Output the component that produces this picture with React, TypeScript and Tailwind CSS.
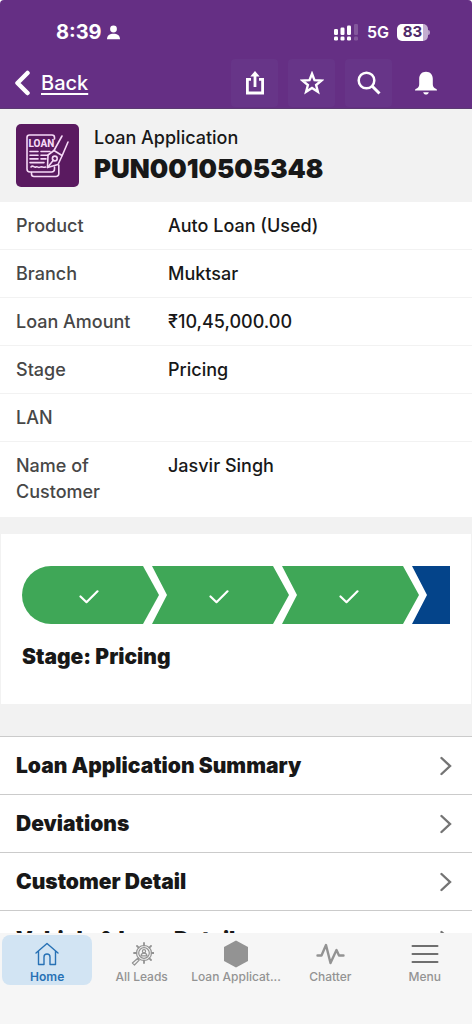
import type { ReactNode } from "react";
import clsx from "clsx";

interface Field {
  label: string;
  value: string;
}

const fields: Field[] = [
  { label: "Product", value: "Auto Loan (Used)" },
  { label: "Branch", value: "Muktsar" },
  { label: "Loan Amount", value: "₹10,45,000.00" },
  { label: "Stage", value: "Pricing" },
  { label: "LAN", value: "" },
  { label: "Name of Customer", value: "Jasvir Singh" },
];

const sections = [
  "Loan Application Summary",
  "Deviations",
  "Customer Detail",
  "Vehicle & Loan Detail",
];

function StatusBar() {
  return (
    <div className="flex h-[58px] items-center justify-between pt-[6px] pr-[42px] pl-14">
      <div className="flex items-center gap-1">
        <span className="text-xl leading-6 font-bold">8:39</span>
        <svg width="15" height="15" viewBox="0 0 15 15" fill="currentColor">
          <circle cx="7.5" cy="4" r="3.4" />
          <path d="M1 14.2c0-3.6 2.8-5.4 6.5-5.4s6.5 1.8 6.5 5.4z" />
        </svg>
      </div>
      <div className="flex items-center gap-2">
        <svg width="25" height="17" viewBox="0 0 25 17" fill="currentColor">
          <rect x="0" y="5" width="4" height="6" rx="1.2" />
          <rect x="6.5" y="3.5" width="4" height="7.5" rx="1.2" />
          <rect x="13" y="1.5" width="4" height="9.5" rx="1.2" />
          <rect x="0" y="12.5" width="4" height="4" rx="1.2" />
          <rect x="6.5" y="12.5" width="4" height="4" rx="1.2" />
          <rect x="13" y="12.5" width="4" height="4" rx="1.2" />
          <rect x="20" y="0" width="4" height="11" rx="1.2" opacity="0.2" />
          <rect x="20" y="12.5" width="4" height="4" rx="1.2" opacity="0.2" />
        </svg>
        <span className="text-base leading-6 font-semibold">5G</span>
        <div className="flex items-center">
          <span className="flex h-[17px] w-[31px] items-center justify-center rounded-[5px] bg-linear-to-r from-white from-85% to-[#c3aed0] to-85% text-[15px] leading-4 font-bold text-[#4f2a68]">
            83
          </span>
          <span className="h-[5px] w-[2px] rounded-r-full bg-[#b59cc6]" />
        </div>
      </div>
    </div>
  );
}

function HeaderButton({
  label,
  plain,
  children,
}: {
  label: string;
  plain?: boolean;
  children: ReactNode;
}) {
  return (
    <button
      aria-label={label}
      className={clsx(
        "flex h-12 w-[47px] items-center justify-center rounded-sm",
        !plain && "bg-[#673588]"
      )}
    >
      {children}
    </button>
  );
}

function Header() {
  return (
    <header className="shrink-0 rounded-t-[4px] border-b border-[#5b3a72] bg-[#652f84] text-white">
      <StatusBar />
      <div className="flex h-[50px] items-center justify-between pr-[23px] pl-[14px]">
        <a href="#back" className="flex items-center gap-[10px]">
          <svg width="17" height="26" viewBox="0 0 17 26" fill="none">
            <path
              d="M13.5 3 3.5 13l10 10"
              stroke="currentColor"
              strokeWidth="4.5"
              strokeLinecap="round"
              strokeLinejoin="round"
            />
          </svg>
          <span className="text-xl leading-6 font-medium underline decoration-2 underline-offset-3">
            Back
          </span>
        </a>
        <div className="flex gap-[10px]">
          <HeaderButton label="Share">
            <svg width="20" height="24" viewBox="0 0 20 24" fill="none" stroke="currentColor" strokeWidth="2.8">
              <path d="M6 8.4H2.4V22h15.2V8.4H14" />
              <path d="M10 16V4" />
              <path d="M10 0 5.3 5.6h9.4z" fill="currentColor" stroke="none" />
            </svg>
          </HeaderButton>
          <HeaderButton label="Favorite">
            <svg width="24" height="24" viewBox="0 0 24 24" fill="none" stroke="currentColor" strokeWidth="2.4">
              <path d="m12 2.8 2.5 6.4 6.9.4-5.3 4.4 1.8 6.8-5.900-3.800-5.900 3.800 1.800-6.800-5.300-4.400 6.900-.4z" />
            </svg>
          </HeaderButton>
          <HeaderButton label="Search">
            <svg width="24" height="24" viewBox="0 0 24 24" fill="none" stroke="currentColor" strokeWidth="2.5">
              <circle cx="9.5" cy="9.5" r="7.8" />
              <path d="m15 15 7.5 7.5" strokeWidth="3" />
            </svg>
          </HeaderButton>
          <HeaderButton label="Notifications" plain>
            <svg width="24" height="24" viewBox="0 0 24 24" fill="currentColor">
              <path d="M12 .8c-4.200 0-6.800 2.800-6.800 7v5.400c0 2.300-1 3.700-3 4.600-.9.400-1.200.8-1.200 1.800h22c0-1-.3-1.400-1.200-1.800-2-.9-3-2.300-3-4.600V7.800c0-4.200-2.600-7-6.800-7z" />
              <path d="M9.200 21.200h5.600c-.4 1.500-1.400 2.300-2.800 2.300s-2.400-.8-2.800-2.300z" />
            </svg>
          </HeaderButton>
        </div>
      </div>
    </header>
  );
}

function LoanIcon() {
  return (
    <svg
      className="shrink-0 rounded-[5px] bg-[#5a1a60]"
      width="63"
      height="63"
      viewBox="0 0 63 63"
      fill="none"
      stroke="#f6d9f7"
      strokeWidth="1.6"
      strokeLinecap="round"
      strokeLinejoin="round"
    >
      <path d="M38.5 15v-1.5A2.5 2.5 0 0 0 36 11H13.5a2.5 2.5 0 0 0-2.5 2.5V45a3 3 0 0 0 3 3h21.500a3 3 0 0 0 3-3V43" />
      <path d="M15.5 48.5V50a2.500 2.500 0 0 0 2.500 2.500h22a2.800 2.800 0 0 0 2.800-2.800V41" />
      <text
        className="font-[Roboto,sans-serif]"
        x="12.5"
        y="22.5"
        fontSize="10"
        fontWeight="800"
        fill="#f6d9f7"
        stroke="none"
      >
        LOAN
      </text>
      <path d="M14 27.5h8M25 27.5h9M14 31.2h8M25 31.2h7M14 34.9h8M25 34.9h5M14 38.6h14M15 43c2-2.500 3 1 5 0s2 1.500 4 .2 3 1 5.500-.2" />
      <path d="m46 12-8 14.500-6 4.500-.5 12.500 10.500-3 4-8.500L52 18" />
      <path d="m38 26.500 8 5M31.500 43.500l6-7.500" />
      <circle cx="38.8" cy="34.5" r="2.4" />
    </svg>
  );
}

function StepCheck() {
  return (
    <svg className="mt-1" width="20" height="14" viewBox="0 0 20 14" fill="none">
      <path
        d="m1.5 6.500 6 5.700L18.500 1.300"
        stroke="white"
        strokeWidth="2.2"
        strokeLinecap="round"
        strokeLinejoin="round"
      />
    </svg>
  );
}

function StagePath() {
  return (
    <div className="mx-px bg-white px-[21px] pt-8 pb-[34px]">
      <ol className="flex h-[58px]">
        <li className="flex w-[137px] shrink-0 items-center justify-center rounded-l-full bg-[#3fa757] pr-[3px] [clip-path:polygon(0_0,calc(100%-16px)_0,100%_50%,calc(100%-16px)_100%,0_100%)]">
          <StepCheck />
        </li>
        {["Underwriting", "Approval"].map((step) => (
          <li
            key={step}
            aria-label={step}
            className="-ml-[7px] flex w-[137px] shrink-0 items-center justify-center bg-[#3fa757] pr-[3px] [clip-path:polygon(0_0,calc(100%-16px)_0,100%_50%,calc(100%-16px)_100%,0_100%,15px_50%)]"
          >
            <StepCheck />
          </li>
        ))}
        <li className="-ml-[7px] flex-1 bg-[#04448a] [clip-path:polygon(0_0,100%_0,100%_100%,0_100%,15px_50%)]" />
      </ol>
      <p className="mt-5 text-[21px] leading-[26px] font-black">Stage: Pricing</p>
    </div>
  );
}

function SectionRow({ title }: { title: string }) {
  return (
    <li className="border-t border-[#cbcbcb]">
      <button className="flex h-[57px] w-full items-center justify-between pr-5 pl-4 text-left text-[21px] leading-[26px] font-black">
        {title}
        <svg width="12" height="20" viewBox="0 0 12 20" fill="none">
          <path d="m1.5 2 8.500 8-8.500 8" stroke="#747474" strokeWidth="2.4" strokeLinecap="round" />
        </svg>
      </button>
    </li>
  );
}

function NavItem({
  label,
  active,
  children,
}: {
  label: string;
  active?: boolean;
  children: ReactNode;
}) {
  return (
    <a
      href="#nav"
      aria-current={active ? "page" : undefined}
      className={clsx(
        "mx-[2px] flex h-[50px] flex-col items-center rounded-lg pt-1 text-xs leading-4",
        active
          ? "bg-[#d2e4f3] font-semibold text-[#2771b5]"
          : "font-medium text-[#939393]"
      )}
    >
      <span className="flex h-8 items-center">{children}</span>
      <span className="whitespace-nowrap">{label}</span>
    </a>
  );
}

function BottomNav() {
  return (
    <nav className="grid h-[91px] shrink-0 grid-cols-5 bg-[#f6f6f6] pt-[2px]">
      <NavItem label="Home" active>
        <svg width="24" height="24" viewBox="0 0 24 24" fill="none" stroke="currentColor" strokeWidth="1.4" strokeLinejoin="round" strokeLinecap="round">
          <path d="M1 11 12 1.500 23 11M3.500 9v13.500h5.500V15a3 3 0 0 1 6 0v7.500h5.500V9" />
        </svg>
      </NavItem>
      <NavItem label="All Leads">
        <svg width="24" height="24" viewBox="0 0 24 24" fill="none" stroke="currentColor" strokeWidth="1.2" strokeLinecap="round" strokeLinejoin="round">
          <circle cx="14" cy="11" r="7.5" />
          <circle cx="14" cy="11" r="5.3" />
          <circle cx="14" cy="9.3" r="1.6" />
          <path d="M11 13.800c.3-1.900 1.300-2.600 3-2.600s2.700.7 3 2.600z" />
          <path d="m8.500 16-1.500 1.500M7.500 16.500l1.700 1.700L4.500 23 2.400 21z" />
          <path d="M14 3.500V1M21.500 11H24M19.300 5.700 21 4M8.700 5.700 7 4M6.500 11H4M19.300 16.300 21 18M14 18.500V21" strokeWidth="1.8" />
        </svg>
      </NavItem>
      <NavItem label="Loan Applicat...">
        <svg width="26" height="28" viewBox="0 0 26 28" fill="#939393">
          <path d="M13 .5 25 7v14l-12 6.500L1 21V7z" />
        </svg>
      </NavItem>
      <NavItem label="Chatter">
        <svg width="29" height="22" viewBox="0 0 29 22" fill="none" stroke="currentColor" strokeWidth="2.4" strokeLinecap="round" strokeLinejoin="round">
          <path d="M1.500 12.500H5.500L10 2l4.500 18 6-13 2.500 5.500h4.500" />
        </svg>
      </NavItem>
      <NavItem label="Menu">
        <svg width="28" height="20" viewBox="0 0 28 20" stroke="#6f6f6f" strokeWidth="2" strokeLinecap="round">
          <path d="M1.500 2h25M1.500 10h25M1.500 18h25" />
        </svg>
      </NavItem>
    </nav>
  );
}

export default function App() {
  return (
    <div className="flex h-screen flex-col bg-white font-[Inter,'Noto_Sans',sans-serif] text-[#181818]">
      <Header />

      <main className="min-h-0 flex-1 overflow-hidden bg-[#f2f2f2]">
        <div className="flex h-[93px] items-center gap-[15px] px-4">
          <LoanIcon />
          <div>
            <p className="text-lg leading-[26px] font-medium">Loan Application</p>
            <h1 className="text-[26px] leading-9 font-black">PUN0010505348</h1>
          </div>
        </div>

        {/* Record highlights */}
        <dl className="bg-white text-lg leading-[26px] font-medium">
          {fields.map((field) => (
            <div
              key={field.label}
              className="flex border-b border-[#f2f2f2] px-4 pt-[11px] pb-[10px] last:border-0 last:pb-3"
            >
              <dt className="w-[152px] shrink-0 pr-4 text-[#474747]">{field.label}</dt>
              <dd>{field.value}</dd>
            </div>
          ))}
        </dl>

        <div className="pt-[17px] pb-8">
          <StagePath />
        </div>

        <ul className="bg-white">
          {sections.map((title) => (
            <SectionRow key={title} title={title} />
          ))}
        </ul>
      </main>

      <BottomNav />
    </div>
  );
}
